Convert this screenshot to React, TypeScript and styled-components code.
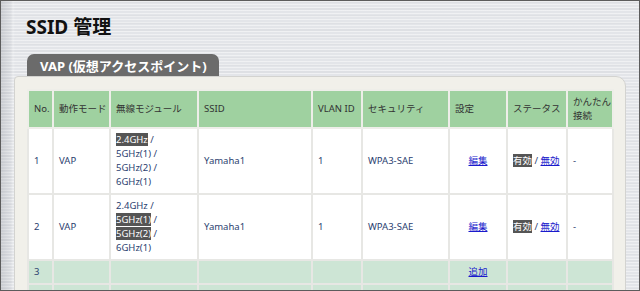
import styled, { createGlobalStyle } from "styled-components";

const GlobalStyle = createGlobalStyle`
  html, body {
    margin: 0;
    padding: 0;
  }
  body {
    font-family: "Noto Sans", "Noto Sans CJK JP", sans-serif;
  }
`;

interface Row {
  no: string;
  mode: string;
  modules: { label: string; active: boolean }[];
  ssid: string;
  vlan: string;
  security: string;
  enabled: boolean;
}

const rows: Row[] = [
  {
    no: "1",
    mode: "VAP",
    modules: [
      { label: "2.4GHz", active: true },
      { label: "5GHz(1)", active: false },
      { label: "5GHz(2)", active: false },
      { label: "6GHz(1)", active: false },
    ],
    ssid: "Yamaha1",
    vlan: "1",
    security: "WPA3-SAE",
    enabled: true,
  },
  {
    no: "2",
    mode: "VAP",
    modules: [
      { label: "2.4GHz", active: false },
      { label: "5GHz(1)", active: true },
      { label: "5GHz(2)", active: true },
      { label: "6GHz(1)", active: false },
    ],
    ssid: "Yamaha1",
    vlan: "1",
    security: "WPA3-SAE",
    enabled: true,
  },
];

const widths = [25, 57, 88, 114, 50, 87, 58, 60, 46];

export default function App() {
  return (
    <>
      <GlobalStyle />
      <Screen>
        <Title>SSID 管理</Title>
        <TabBar>
          <Tab>VAP (仮想アクセスポイント)</Tab>
        </TabBar>
        <Panel>
          <Table>
            <colgroup>
              {widths.map((w, i) => (
                <col key={i} style={{ width: w }} />
              ))}
            </colgroup>
            <thead>
              <tr>
                <Th>No.</Th>
                <Th>動作モード</Th>
                <Th>無線モジュール</Th>
                <Th>SSID</Th>
                <Th>VLAN ID</Th>
                <Th>セキュリティ</Th>
                <Th>設定</Th>
                <Th>ステータス</Th>
                <Th>
                  かんたん
                  <br />
                  接続
                </Th>
              </tr>
            </thead>
            <tbody>
              {rows.map((r) => (
                <tr key={r.no}>
                  <Td>{r.no}</Td>
                  <Td>{r.mode}</Td>
                  <Td>
                    {r.modules.map((m, i) => (
                      <span key={i}>
                        <Mark $on={m.active}>{m.label}</Mark>
                        {i < r.modules.length - 1 && " /"}
                        {i < r.modules.length - 1 && <br />}
                      </span>
                    ))}
                  </Td>
                  <Td>{r.ssid}</Td>
                  <Td>{r.vlan}</Td>
                  <Td>{r.security}</Td>
                  <Td $center>
                    <Link href="#">編集</Link>
                  </Td>
                  <Td>
                    <Mark $on={r.enabled}>有効</Mark> /{" "}
                    <Link href="#">無効</Link>
                  </Td>
                  <Td>-</Td>
                </tr>
              ))}
              <tr>
                <Td $empty>3</Td>
                <Td $empty />
                <Td $empty />
                <Td $empty />
                <Td $empty />
                <Td $empty />
                <Td $empty $center>
                  <Link href="#">追加</Link>
                </Td>
                <Td $empty />
                <Td $empty />
              </tr>
              <tr>
                {widths.map((_, i) => (
                  <Td key={i} $empty>
                    &nbsp;
                  </Td>
                ))}
              </tr>
            </tbody>
          </Table>
        </Panel>
      </Screen>
    </>
  );
}

const Screen = styled.div`
  width: 640px;
  height: 291px;
  box-sizing: border-box;
  border: 1px solid #5c5c5c;
  overflow: hidden;
  padding: 0 13px;
  background-color: #e3e5e9;
  background-image: linear-gradient(
      90deg,
      rgba(90, 95, 105, 0.18) 0,
      rgba(90, 95, 105, 0.06) 10px,
      rgba(255, 255, 255, 0.2) 12px,
      transparent 14px
    ),
    repeating-linear-gradient(
      180deg,
      rgba(255, 255, 255, 0.45) 0 1px,
      transparent 1px 3px
    ),
    repeating-linear-gradient(
      180deg,
      rgba(0, 0, 0, 0.025) 0 2px,
      transparent 2px 7px
    );
`;

const Title = styled.h1`
  margin: 0;
  padding: 15px 0 0 12px;
  height: 38px;
  box-sizing: border-box;
  font-size: 19px;
  line-height: 22px;
  font-weight: 700;
  color: #111;
`;

const TabBar = styled.div`
  display: flex;
  height: 22px;
  padding-left: 13px;
  margin-top: 15px;
`;

const Tab = styled.div`
  display: flex;
  align-items: center;
  padding: 0 13px;
  width: 192px;
  box-sizing: border-box;
  background: #6b6b6b;
  border-radius: 7px 7px 0 0;
  color: #fff;
  font-size: 13px;
  font-weight: 700;
  white-space: nowrap;
`;

const Panel = styled.div`
  background: #f1f0ea;
  border: 1px solid #d3d3d0;
  border-radius: 4px 10px 0 0;
  padding: 12px 13px 0 12px;
  height: 260px;
  box-sizing: border-box;
`;

const Table = styled.table`
  table-layout: fixed;
  width: 585px;
  border-collapse: collapse;
  font-size: 9.5px;
  line-height: 14px;
`;

const Th = styled.th`
  background: #9fd1a0;
  border: 2px solid #eeeee9;
  padding: 4px 4px 4px 5px;
  text-align: left;
  font-weight: 400;
  color: #333;
  vertical-align: middle;
  white-space: nowrap;
  overflow: visible;
`;

const Td = styled.td<{ $center?: boolean; $empty?: boolean }>`
  background: ${(p) => (p.$empty ? "#cde5d5" : "#fff")};
  border: 2px solid #e7e7e4;
  padding: 4px 5px;
  text-align: ${(p) => (p.$center ? "center" : "left")};
  vertical-align: middle;
  color: #2b416f;
  white-space: nowrap;
`;

const Mark = styled.span<{ $on: boolean }>`
  background: ${(p) => (p.$on ? "#555" : "transparent")};
  color: ${(p) => (p.$on ? "#fff" : "inherit")};
`;

const Link = styled.a`
  color: #1a1acc;
  text-decoration: underline;
`;
